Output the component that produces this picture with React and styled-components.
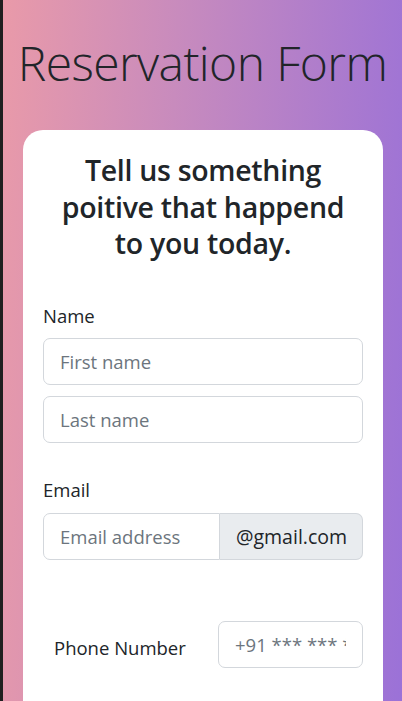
import React from "react";
import styled, { createGlobalStyle } from "styled-components";

const Global = createGlobalStyle`
  html, body { margin: 0; padding: 0; }
  body {
    font-family: "Open Sans", "Noto Sans", sans-serif;
    color: #212529;
    background: #1f1f1f;
  }
  * { box-sizing: border-box; }
`;

const Page = styled.div`
  min-height: 800px;
  margin-left: 3px;
  background: linear-gradient(93deg, #e99aa9 0%, #c88bbd 40%, #9a71d8 100%);
  padding: 27px 0 0 0;
  display: flex;
  flex-direction: column;
  align-items: center;
`;

const Title = styled.h1`
  margin: 0;
  font-family: "Open Sans", sans-serif;
  font-weight: 300;
  font-size: 48px;
  line-height: 72px;
  letter-spacing: -0.6px;
  color: #212529;
  text-align: center;
  white-space: nowrap;
`;

const Card = styled.div`
  margin-top: 31px;
  width: 360px;
  margin-left: 1px;
  background: #fff;
  border-radius: 20px 20px 0 0;
  padding: 22px 20px 80px 20px;
`;

const Heading = styled.h2`
  margin: 0 0 40px 0;
  font-family: "Open Sans", sans-serif;
  font-weight: 600;
  font-size: 28.5px;
  line-height: 36.5px;
  letter-spacing: -0.3px;
  text-align: center;
  color: #212529;
  padding: 0 4px;
`;

const Label = styled.label`
  display: block;
  font-size: 18.5px;
  line-height: 27px;
  margin: 0 0 ${(p) => p.$mb || 10}px 0;
  color: #212529;
`;

const Input = styled.input`
  display: block;
  width: 100%;
  height: 47px;
  padding: 0 16px;
  font-family: "Open Sans", sans-serif;
  font-size: 18.5px;
  color: #212529;
  background: #fff;
  border: 1px solid #d3d7dc;
  border-radius: 7px;
  margin-bottom: ${(p) => p.$mb || 0}px;
  outline: none;
  &::placeholder { color: #6c757d; }
`;

const Group = styled.div`
  display: flex;
  margin-bottom: 61px;
`;

const GroupInput = styled(Input)`
  flex: 1;
  min-width: 0;
  border-radius: 7px 0 0 7px;
`;

const Addon = styled.span`
  display: flex;
  align-items: center;
  height: 47px;
  width: 143px;
  padding: 0 14px 0 16px;
  font-size: 19.5px;
  color: #212529;
  background: #e9ecef;
  border: 1px solid #d3d7dc;
  border-left: none;
  border-radius: 0 7px 7px 0;
  white-space: nowrap;
`;

const Section = styled.div`
  margin-bottom: 33px;
`;

const PhoneRow = styled.div`
  display: grid;
  grid-template-columns: 175px 1fr;
  align-items: center;
`;

const PhoneLabel = styled.label`
  font-size: 18.5px;
  line-height: 27px;
  padding-left: 11px;
  padding-top: 6px;
  color: #212529;
`;

export default function App() {
  return (
    <>
      <Global />
      <Page>
        <Title>Reservation Form</Title>
        <Card>
          <Heading>Tell us something poitive that happend to you today.</Heading>
          <Section>
            <Label $mb={9}>Name</Label>
            <Input placeholder="First name" $mb={11} />
            <Input placeholder="Last name" />
          </Section>
          <Label $mb={10}>Email</Label>
          <Group>
            <GroupInput placeholder="Email address" />
            <Addon>@gmail.com</Addon>
          </Group>
          <PhoneRow>
            <PhoneLabel>Phone Number</PhoneLabel>
            <Input placeholder="+91 *** *** ***" />
          </PhoneRow>
        </Card>
      </Page>
    </>
  );
}
